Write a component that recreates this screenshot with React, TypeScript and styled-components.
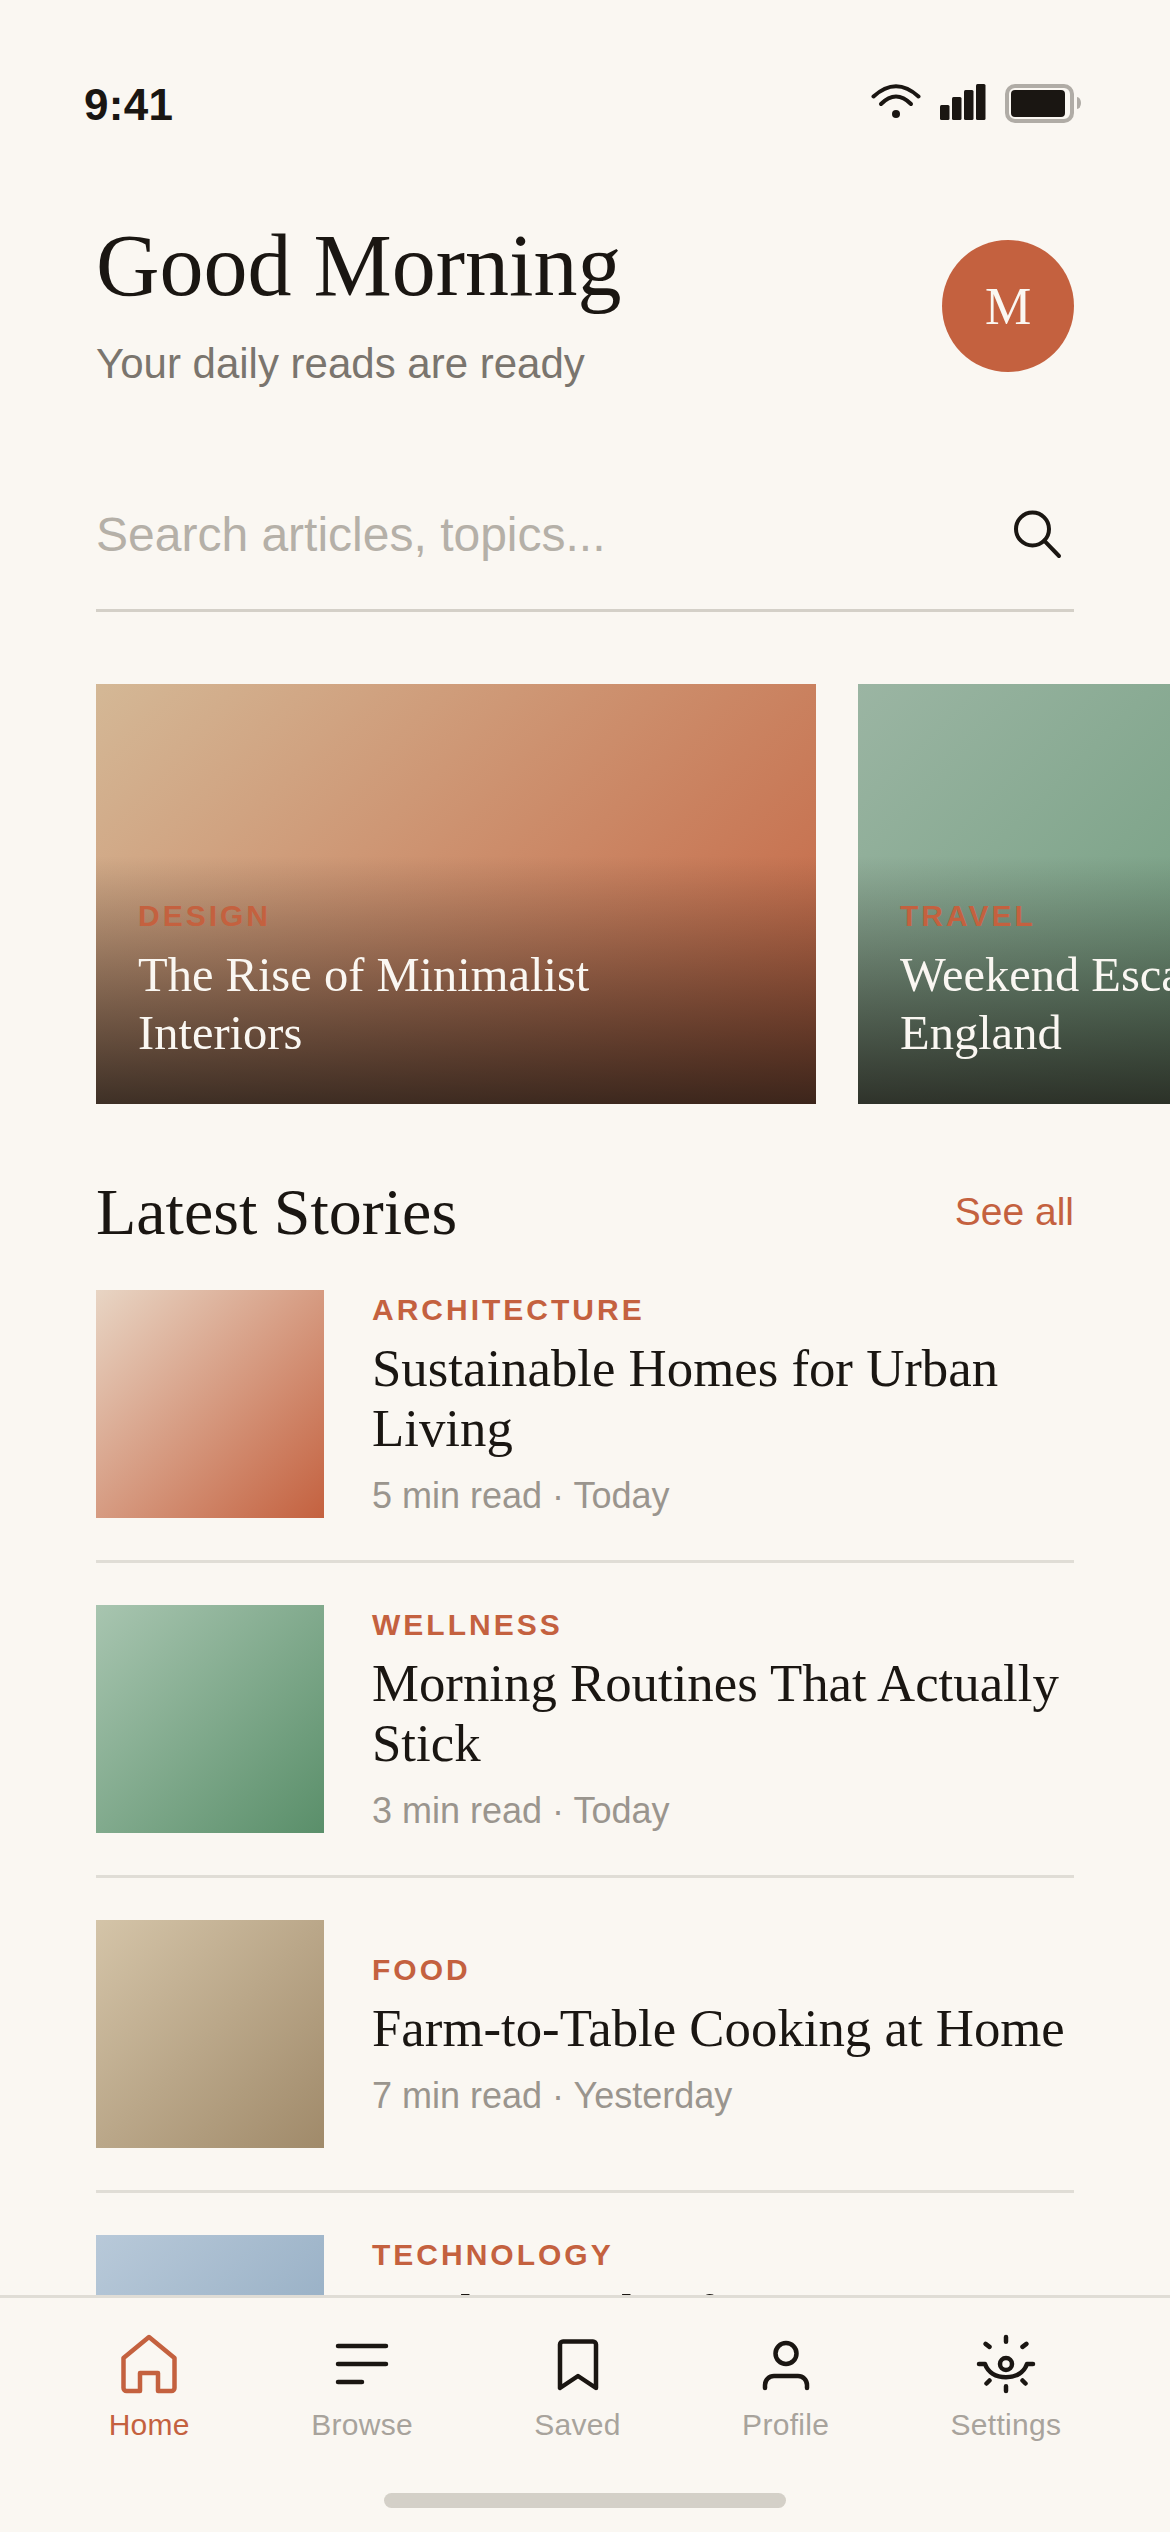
import React from 'react';
import styled, { createGlobalStyle } from 'styled-components';

const GlobalStyle = createGlobalStyle`
  html, body {
    margin: 0;
    padding: 0;
    background: #faf7f2;
  }
  * {
    box-sizing: border-box;
  }
`;

const SANS = '"Liberation Sans", Arial, sans-serif';
const SERIF = '"Liberation Serif", Georgia, serif';
const ACCENT = '#c4613f';

const Screen = styled.div`
  width: 1170px;
  height: 2532px;
  background: #faf7f2;
  display: flex;
  flex-direction: column;
  overflow: hidden;
  font-family: ${SANS};
  color: #1a1612;
`;

const Scroll = styled.main`
  flex: 1;
  min-height: 0;
  overflow: hidden;
`;

const StatusBar = styled.div`
  height: 132px;
  padding: 81px 87px 0 84px;
  display: flex;
  justify-content: space-between;
  align-items: flex-start;
`;

const Time = styled.span`
  font-size: 44px;
  line-height: 48px;
  font-weight: 700;
  letter-spacing: 0.3px;
`;

const StatusIcons = styled.div`
  display: flex;
  align-items: flex-start;
  gap: 19px;
  margin-top: 3px;
`;

const Header = styled.header`
  padding: 84px 96px 0;
  display: flex;
  justify-content: space-between;
  align-items: flex-start;
`;

const Title = styled.h1`
  margin: 0;
  font-family: ${SERIF};
  font-weight: 400;
  font-size: 88px;
  line-height: 100px;
`;

const Subtitle = styled.p`
  margin: 23px 0 0;
  font-size: 42px;
  line-height: 50px;
  color: #7a756e;
`;

const Avatar = styled.div`
  width: 132px;
  height: 132px;
  margin-top: 24px;
  border-radius: 50%;
  background: ${ACCENT};
  color: #faf7f2;
  font-family: ${SERIF};
  font-size: 52px;
  display: flex;
  align-items: center;
  justify-content: center;
`;

const SearchBar = styled.div`
  margin: 96px 96px 0;
  height: 127px;
  border-bottom: 3px solid #d4d0c8;
  display: flex;
  align-items: center;
  padding: 0 10px 30px 0;
`;

const SearchInput = styled.input`
  flex: 1;
  border: 0;
  outline: 0;
  padding: 5px 0 0;
  background: transparent;
  font-family: ${SANS};
  font-size: 48px;
  color: #1a1612;

  &::placeholder {
    color: #b5b0a8;
    opacity: 1;
  }
`;

const Carousel = styled.section`
  margin-top: 72px;
  padding-left: 96px;
  display: flex;
  gap: 42px;
  overflow: hidden;
`;

const FeatureCard = styled.article<{ $from: string; $to: string }>`
  flex: 0 0 720px;
  height: 420px;
  position: relative;
  background: linear-gradient(135deg, ${(p) => p.$from}, ${(p) => p.$to});
`;

const FeatureOverlay = styled.div`
  position: absolute;
  left: 0;
  right: 0;
  bottom: 0;
  padding: 42px;
  background: linear-gradient(transparent, rgba(26, 22, 18, 0.8));
`;

const FeatureCategory = styled.div`
  font-size: 30px;
  line-height: 36px;
  font-weight: 700;
  letter-spacing: 3px;
  color: ${ACCENT};
  text-transform: uppercase;
`;

const FeatureTitle = styled.h3`
  margin: 12px 0 0;
  font-family: ${SERIF};
  font-weight: 400;
  font-size: 48.5px;
  line-height: 58px;
  color: #faf7f2;
  white-space: pre;
`;

const SectionHead = styled.div`
  margin: 72px 96px 0;
  display: flex;
  justify-content: space-between;
  align-items: center;
`;

const SectionTitle = styled.h2`
  margin: 0;
  font-family: ${SERIF};
  font-weight: 400;
  font-size: 66px;
  line-height: 72px;
`;

const SeeAll = styled.a`
  font-size: 39px;
  line-height: 48px;
  color: ${ACCENT};
`;

const StoryList = styled.div`
  margin: 42px 96px 0;
  display: flex;
  flex-direction: column;
`;

const StoryRow = styled.article`
  display: flex;
  gap: 48px;
  padding-bottom: 42px;
  margin-bottom: 42px;
  border-bottom: 3px solid #e0ddd6;
`;

const Thumb = styled.div<{ $from: string; $to: string }>`
  flex: 0 0 228px;
  height: 228px;
  background: linear-gradient(135deg, ${(p) => p.$from}, ${(p) => p.$to});
`;

const StoryBody = styled.div`
  flex: 1;
  min-width: 0;
  display: flex;
  flex-direction: column;
  justify-content: center;
`;

const StoryCategory = styled.div`
  font-size: 30px;
  line-height: 36px;
  font-weight: 700;
  letter-spacing: 3px;
  color: ${ACCENT};
  text-transform: uppercase;
`;

const StoryTitle = styled.h4`
  margin: 10px 0 0;
  font-family: ${SERIF};
  font-weight: 400;
  font-size: 52.8px;
  line-height: 60px;
`;

const StoryMeta = styled.div`
  margin-top: 17px;
  font-size: 36px;
  line-height: 42px;
  color: #9a958e;
`;

const BottomNav = styled.nav`
  flex: 0 0 237px;
  border-top: 3px solid #e0ddd6;
  background: #faf7f2;
  padding: 30px 48px 0;
  display: flex;
  justify-content: space-around;
  align-items: flex-start;
  position: relative;
`;

const NavItem = styled.a<{ $active?: boolean }>`
  display: flex;
  flex-direction: column;
  align-items: center;
  gap: 7px;
  font-size: 30px;
  line-height: 36px;
  letter-spacing: 0.3px;
  color: ${(p) => (p.$active ? ACCENT : '#a8a39c')};

  svg {
    stroke: ${(p) => (p.$active ? ACCENT : '#1a1612')};
  }
`;

const NavIcon = styled.svg`
  width: 72px;
  height: 72px;
  fill: none;
  stroke-width: 1.5;
  stroke-linecap: round;
  stroke-linejoin: round;
`;

const HomeBar = styled.div`
  position: absolute;
  left: 384px;
  bottom: 24px;
  width: 402px;
  height: 15px;
  border-radius: 8px;
  background: #d4d0c8;
`;

const WifiIcon = () => (
  <svg width="50" height="36" viewBox="0 0 50 36" fill="none" stroke="#1a1612" strokeWidth="4" strokeLinecap="round">
    <path d="M2.5 12.5Q25-8 47.5 12.5" />
    <path d="M10 20Q25 5 40 20" />
    <circle cx="25" cy="30" r="4" fill="#1a1612" stroke="none" />
  </svg>
);

const SignalIcon = () => (
  <svg width="46" height="36" viewBox="0 0 46 36" fill="#1a1612">
    <rect x="0" y="21" width="9.5" height="15" rx="1.5" />
    <rect x="12" y="13" width="9.5" height="23" rx="1.5" />
    <rect x="24" y="6" width="9.5" height="30" rx="1.5" />
    <rect x="36" y="0" width="9.5" height="36" rx="1.5" />
  </svg>
);

const BatteryIcon = () => (
  <svg width="78" height="39" viewBox="0 0 78 39">
    <rect x="2" y="2" width="65" height="35" rx="8" fill="none" stroke="#b0aca6" strokeWidth="4" />
    <rect x="6" y="6" width="54" height="27" rx="4" fill="#1a1612" />
    <path d="M72 13a4 6 0 0 1 4 6a4 6 0 0 1-4 6z" fill="#b0aca6" />
  </svg>
);

const featured = [
  { category: 'Design', title: 'The Rise of Minimalist\nInteriors', from: '#d4b896', to: '#c4613f' },
  { category: 'Travel', title: 'Weekend Escapes in\nEngland', from: '#9bb5a3', to: '#5a8f6a' },
];

const stories = [
  { category: 'Architecture', title: 'Sustainable Homes for Urban Living', meta: '5 min read · Today', from: '#e8d5c4', to: '#c4613f' },
  { category: 'Wellness', title: 'Morning Routines That Actually Stick', meta: '3 min read · Today', from: '#a8c5b0', to: '#5a8f6a' },
  { category: 'Food', title: 'Farm-to-Table Cooking at Home', meta: '7 min read · Yesterday', from: '#d4c4a8', to: '#a08a6a' },
  { category: 'Technology', title: 'Analog Tools of Focus in a Digital World', meta: '6 min read · Yesterday', from: '#b8c9d9', to: '#8aa5bd' },
];

const navItems = [
  {
    label: 'Home',
    active: true,
    icon: <path d="M3.5 10L12 3l8.5 7v10a1 1 0 0 1-1 1H15v-6H9v6H4.5a1 1 0 0 1-1-1z" />,
  },
  { label: 'Browse', icon: <path d="M4 6h16M4 12h16M4 18h8" /> },
  { label: 'Saved', icon: <path d="M6 20V5.5a1 1 0 0 1 1-1h10a1 1 0 0 1 1 1V20l-6-4z" /> },
  {
    label: 'Profile',
    icon: (
      <>
        <circle cx="12" cy="8.5" r="3.5" />
        <path d="M5 20v-1a3 3 0 0 1 3-3h8a3 3 0 0 1 3 3v1" />
      </>
    ),
  },
  {
    label: 'Settings',
    icon: (
      <>
        <circle cx="12" cy="12" r="2" />
        <path d="M12 3v1.6M12 19.4V21M5.2 5.3l1.3 1M18.8 5.3l-1.3 1M5.5 18.5l1-1M18.5 18.5l-1-1" />
        <path d="M3 12h2c1 2.8 3.6 4.4 7 4.4s6-1.6 7-4.4h2" />
      </>
    ),
  },
];

const App: React.FC = () => {
  return (
    <Screen>
      <GlobalStyle />
      <Scroll>
        <StatusBar>
          <Time>9:41</Time>
          <StatusIcons>
            <WifiIcon />
            <SignalIcon />
            <BatteryIcon />
          </StatusIcons>
        </StatusBar>
        <Header>
          <div>
            <Title>Good Morning</Title>
            <Subtitle>Your daily reads are ready</Subtitle>
          </div>
          <Avatar>M</Avatar>
        </Header>
        <SearchBar>
          <SearchInput placeholder="Search articles, topics..." />
          <svg width="54" height="54" viewBox="0 0 54 54" fill="none" stroke="#1a1612" strokeWidth="4" strokeLinecap="round">
            <circle cx="22.5" cy="24" r="16.5" />
            <path d="M34.2 35.7L49 51" />
          </svg>
        </SearchBar>
        <Carousel>
          {featured.map((item) => (
            <FeatureCard key={item.category} $from={item.from} $to={item.to}>
              <FeatureOverlay>
                <FeatureCategory>{item.category}</FeatureCategory>
                <FeatureTitle>{item.title}</FeatureTitle>
              </FeatureOverlay>
            </FeatureCard>
          ))}
        </Carousel>
        <SectionHead>
          <SectionTitle>Latest Stories</SectionTitle>
          <SeeAll>See all</SeeAll>
        </SectionHead>
        <StoryList>
          {stories.map((story) => (
            <StoryRow key={story.category}>
              <Thumb $from={story.from} $to={story.to} />
              <StoryBody>
                <StoryCategory>{story.category}</StoryCategory>
                <StoryTitle>{story.title}</StoryTitle>
                <StoryMeta>{story.meta}</StoryMeta>
              </StoryBody>
            </StoryRow>
          ))}
        </StoryList>
      </Scroll>
      <BottomNav>
        {navItems.map((item) => (
          <NavItem key={item.label} $active={item.active}>
            <NavIcon viewBox="0 0 24 24">{item.icon}</NavIcon>
            {item.label}
          </NavItem>
        ))}
        <HomeBar />
      </BottomNav>
    </Screen>
  );
};

export default App;
